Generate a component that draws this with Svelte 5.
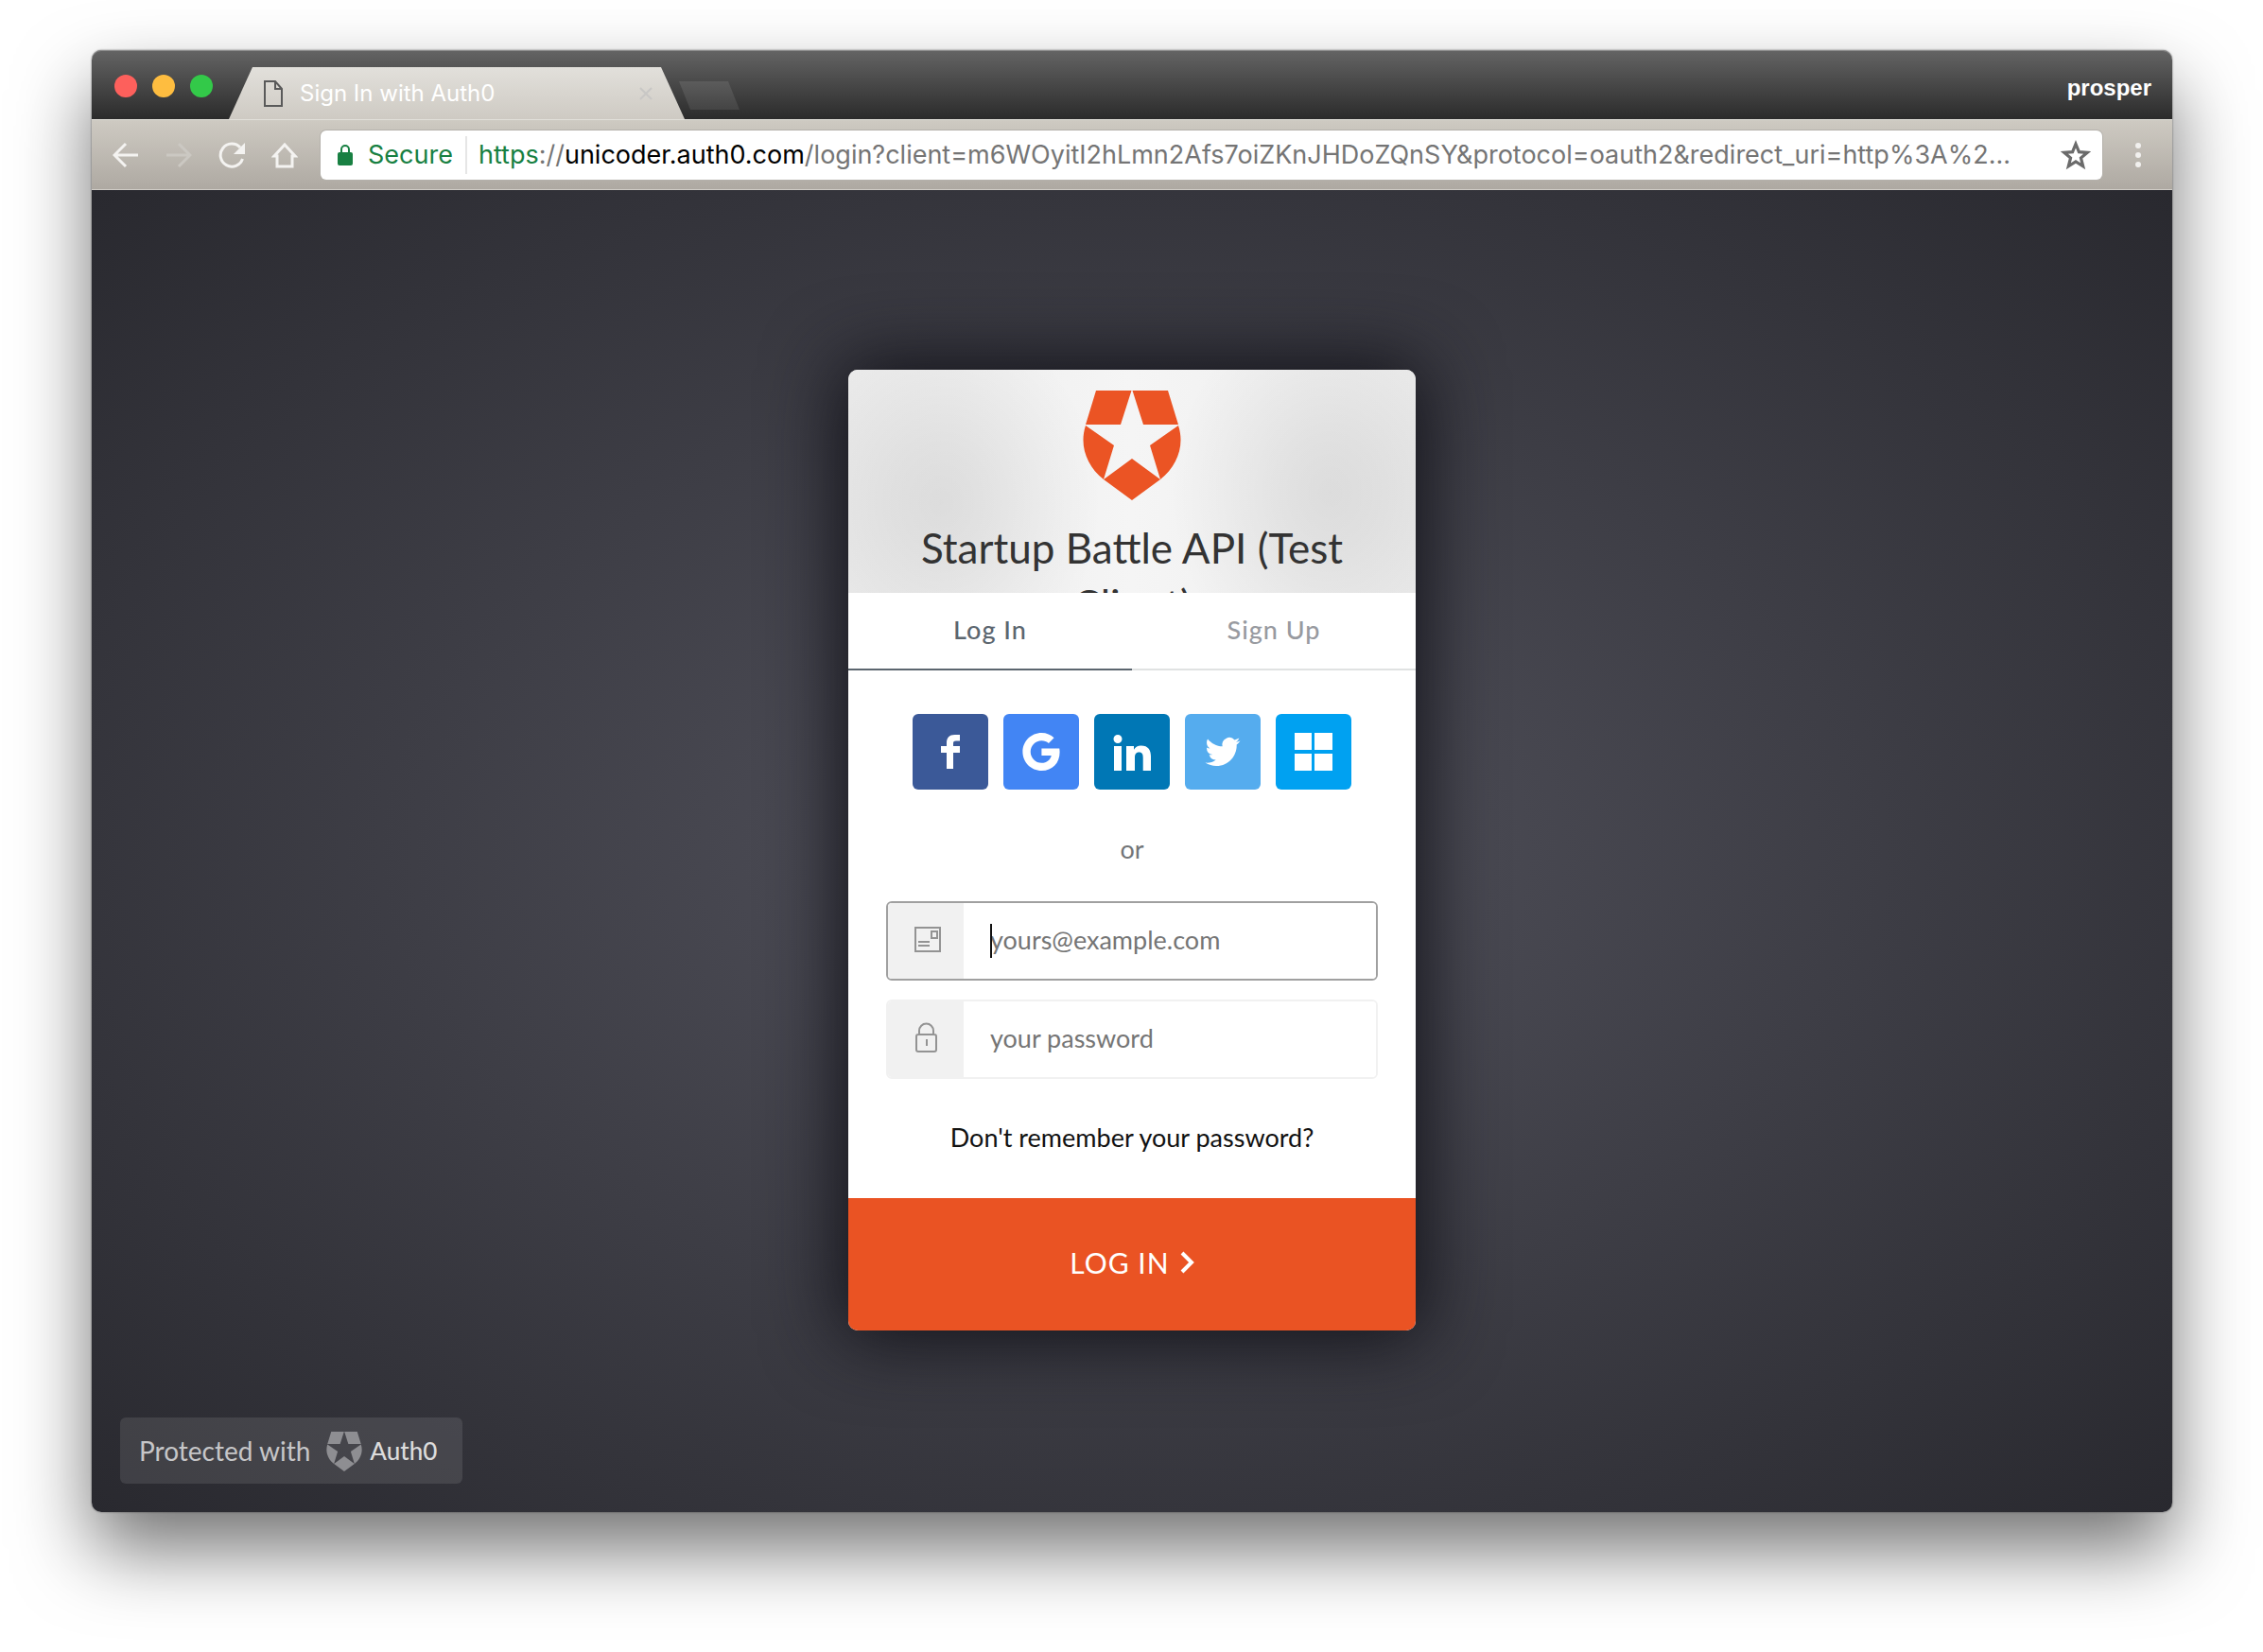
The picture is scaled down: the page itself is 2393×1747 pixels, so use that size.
<script>
  const url = {
    scheme: 'https',
    host: 'unicoder.auth0.com',
    path: '/login?client=m6WOyitI2hLmn2Afs7oiZKnJHDoZQnSY&protocol=oauth2&redirect_uri=http%3A%2...'
  };

  const modes = [
    { id: 'login', label: 'Log In' },
    { id: 'signup', label: 'Sign Up' }
  ];

  const providers = [
    {
      id: 'facebook',
      label: 'Log in with Facebook',
      box: '-10 -2 40 40',
      path: 'M20 0v6.500h-4c-2.600 0-3 1-3 3.100V12h7v7h-7v17H6V19H0v-7h6V8.600C6 3 9 0 14.500 0z'
    },
    {
      id: 'google',
      label: 'Log in with Google',
      box: '0 0 24 24',
      path: 'M12.24 9.900V14.400h6.200c-.6 2.700-2.800 4.700-6.200 4.700-3.900 0-7-3.200-7-7.100s3.100-7.100 7-7.100c1.800 0 3.300.6 4.500 1.700l3.400-3.400C18.100 1.200 15.400 0 12.240 0c-6.635 0-12 5.365-12 12s5.365 12 12 12c6.926 0 11.520-4.869 11.520-11.700 0-.8-.1-1.600-.2-2.400z'
    },
    {
      id: 'linkedin',
      label: 'Log in with LinkedIn',
      box: '0 -2 40 40',
      path: 'M5 0a4.500 4.500 0 1 1 0 9 4.500 4.500 0 0 1 0-9zM1 12h8v26H1zM14 12h8v3.800c1.500-2.900 4.300-4.400 7.500-4.400 7.900 0 10.500 4.900 10.500 11.600v15h-8.300V24.500c0-3.500-.6-6-4.200-6s-4.500 2.500-4.500 6V38h-9z'
    },
    {
      id: 'twitter',
      label: 'Log in with Twitter',
      box: '-1 -1 26 26',
      path: 'M23.953 4.570a10 10 0 0 1-2.825.775 4.958 4.958 0 0 0 2.163-2.723c-.951.555-2.005.959-3.127 1.184a4.920 4.920 0 0 0-8.384 4.482C7.690 8.095 4.067 6.130 1.640 3.162a4.822 4.822 0 0 0-.666 2.475c0 1.710.870 3.213 2.188 4.096a4.904 4.904 0 0 1-2.228-.616v.060a4.923 4.923 0 0 0 3.946 4.827 4.996 4.996 0 0 1-2.212.085 4.936 4.936 0 0 0 4.604 3.417 9.867 9.867 0 0 1-6.102 2.105c-.390 0-.779-.023-1.170-.067a13.995 13.995 0 0 0 7.557 2.209c9.053 0 13.998-7.496 13.998-13.985 0-.210 0-.420-.015-.630A9.935 9.935 0 0 0 24 4.590z'
    },
    {
      id: 'windows',
      label: 'Log in with Windows Live',
      box: '0 0 40 40',
      path: 'M0 0h18v18H0zM21 0h19v18H21zM0 22h18v18H0zM21 22h19v18H21z'
    }
  ];

  let mode = $state('login');
  let email = $state('');
  let password = $state('');
</script>

{#snippet shield()}
  <svg class="shield" viewBox="0 0 104 116" aria-hidden="true">
    <path d="M14 0H51.500L40 36H3ZM52.500 0H90L101 36H64ZM3 37L33 58 22 94C4 80-4 58 3 37ZM101 37L71 58 82 94C100 80 108 58 101 37ZM52 72L82 94 52 116 22 94Z" />
  </svg>
{/snippet}

<div class="desktop">
  <div class="window">
    <header class="titlebar">
      <div class="lights">
        <button class="light close" aria-label="Close window"></button>
        <button class="light minimize" aria-label="Minimize window"></button>
        <button class="light zoom" aria-label="Zoom window"></button>
      </div>
      <div class="tab">
        <svg class="page-icon" viewBox="0 0 20 28" aria-hidden="true">
          <path d="M1 1h11l7 8v18H1zM12 1v8h7" />
        </svg>
        <span class="tab-title">Sign In with Auth0</span>
        <button class="tab-close" aria-label="Close tab">
          <svg viewBox="0 0 14 14"><path d="M1 1l12 12M13 1L1 13" /></svg>
        </button>
      </div>
      <button class="new-tab" aria-label="New tab"></button>
      <span class="profile">prosper</span>
    </header>

    <nav class="toolbar">
      <button class="tool" aria-label="Back">
        <svg viewBox="0 0 28 28"><path d="M27 14H3M14 2L2 14l12 12" /></svg>
      </button>
      <button class="tool" aria-label="Forward" disabled>
        <svg viewBox="0 0 28 28"><path d="M1 14h24M14 2l12 12-12 12" /></svg>
      </button>
      <button class="tool" aria-label="Reload">
        <svg viewBox="0 0 28 28">
          <path d="M23 6A12 12 0 1 0 25.500 18" />
          <path class="solid" d="M28 1v12H16z" />
        </svg>
      </button>
      <button class="tool" aria-label="Home">
        <svg viewBox="0 0 28 28"><path d="M14 3L3 15h3v11h16V15h3z" /></svg>
      </button>
      <div class="address">
        <svg class="lock" viewBox="0 0 16 22" aria-hidden="true">
          <path d="M2 8h12a2 2 0 0 1 2 2v10a2 2 0 0 1-2 2H2a2 2 0 0 1-2-2V10a2 2 0 0 1 2-2z" />
          <path class="shackle" d="M4 9V5a4 4 0 0 1 8 0v4" />
        </svg>
        <span class="secure">Secure</span>
        <span class="url"><span class="scheme">{url.scheme}</span>://<span class="host">{url.host}</span>{url.path}</span>
        <button class="bookmark" aria-label="Bookmark this page">
          <svg viewBox="0 0 30 30">
            <path d="M15 4l3.200 7.900 8.300.6-6.400 5.300 2.100 8.200L15 21.500 7.800 26l2.100-8.200-6.400-5.300 8.300-.6z" />
          </svg>
        </button>
      </div>
      <button class="menu" aria-label="Menu">
        <span></span><span></span><span></span>
      </button>
    </nav>

    <main class="page">
      <form class="card" onsubmit={(e) => e.preventDefault()}>
        <div class="card-head">
          {@render shield()}
          <h1>Startup Battle API (Test Client)</h1>
        </div>

        <div class="modes">
          {#each modes as m (m.id)}
            <button type="button" class="mode" class:active={mode === m.id} onclick={() => (mode = m.id)}>
              {m.label}
            </button>
          {/each}
        </div>

        <div class="card-body">
          <div class="providers">
            {#each providers as p (p.id)}
              <button type="button" class="provider {p.id}" aria-label={p.label}>
                <svg viewBox={p.box}><path d={p.path} /></svg>
              </button>
            {/each}
          </div>

          <p class="or">or</p>

          <div class="field focused">
            <label for="email" aria-label="Email">
              <svg viewBox="0 0 28 28">
                <path d="M1 1h26v25H1zM18 5h6v7h-6zM4 16h12M4 20h12" />
              </svg>
            </label>
            <input id="email" type="email" placeholder="yours@example.com" bind:value={email} />
            <span class="caret"></span>
          </div>
          <div class="field">
            <label for="password" aria-label="Password">
              <svg viewBox="0 0 28 28">
                <path d="M4 10h17a2 2 0 0 1 2 2v14a2 2 0 0 1-2 2H4a2 2 0 0 1-2-2V12a2 2 0 0 1 2-2zM5 10V6a7 7 0 0 1 15 0v4M13 15v7" />
              </svg>
            </label>
            <input id="password" type="password" placeholder="your password" bind:value={password} />
          </div>

          <a class="forgot" href="#reset">Don't remember your password?</a>
        </div>

        <button class="submit" type="submit">
          LOG IN
          <svg viewBox="0 0 16 24"><path d="M3 2l10 10L3 22" /></svg>
        </button>
      </form>

      <a class="badge" href="#auth0">
        <span>Protected with</span>
        {@render shield()}
        <strong>Auth0</strong>
      </a>
    </main>
  </div>
</div>

<style>
  :global(body) { margin: 0; background: #fff; }

  .desktop {
    box-sizing: border-box;
    min-height: 100vh;
    padding: 53px 96px 148px 97px;
    display: flex;
    overflow: hidden;
  }
  .window {
    flex: 1;
    min-width: 0;
    display: flex;
    flex-direction: column;
    border-radius: 10px;
    font-family: Inter, sans-serif;
    box-shadow: 0 0 2px rgba(0, 0, 0, 0.6), 0 40px 80px rgba(0, 0, 0, 0.55);
  }
  button {
    border: none;
    padding: 0;
    background: none;
    font: inherit;
    cursor: pointer;
  }
  svg {
    display: block;
    fill: none;
  }

  .titlebar {
    height: 73px;
    display: flex;
    align-items: flex-end;
    padding: 0 22px 0 24px;
    border-radius: 10px 10px 0 0;
    background: linear-gradient(#646464, #2b2b2b);
    box-shadow: inset 0 1px #8a8a8a;
    box-sizing: border-box;
  }
  .lights {
    display: flex;
    gap: 16px;
    padding-bottom: 23px;
    margin-right: 17px;
  }
  .light {
    width: 24px;
    height: 24px;
    border-radius: 50%;
  }
  .close { background: #fd605c; }
  .minimize { background: #febd40; }
  .zoom { background: #33c949; }

  .tab {
    box-sizing: border-box;
    width: 482px;
    height: 55px;
    padding: 0 34px 0 37px;
    display: flex;
    align-items: center;
    gap: 18px;
    background: linear-gradient(#e2e0db, #cecac3);
    clip-path: polygon(25px 0, 457px 0, 100% 100%, 0 100%);
  }
  .page-icon {
    width: 20px;
    height: 28px;
    stroke: #5a5a5a;
    stroke-width: 2;
  }
  .tab-title {
    flex: 1;
    color: #fff;
    font-size: 24px;
    line-height: 32px;
  }
  .tab-close svg {
    width: 14px;
    height: 14px;
    stroke: #c8c7c5;
    stroke-width: 2;
  }
  .new-tab {
    width: 64px;
    height: 30px;
    margin-bottom: 10px;
    margin-left: -6px;
    background: linear-gradient(#5c5c5c, #444);
    clip-path: polygon(0 0, 52px 0, 100% 100%, 12px 100%);
  }
  .profile {
    margin-left: auto;
    padding-bottom: 17px;
    color: #fff;
    font-family: "Liberation Sans", sans-serif;
    font-size: 24px;
    font-weight: 700;
    line-height: 32px;
  }

  .toolbar {
    box-sizing: border-box;
    height: 75px;
    display: flex;
    align-items: center;
    gap: 28px;
    padding: 0 30px 0 22px;
    border-top: 1px solid #e2e0da;
    border-bottom: 1px solid #cfccc6;
    background: linear-gradient(#cecac2, #aea9a2);
  }
  .tool svg {
    width: 28px;
    height: 28px;
    stroke: #f4f3f1;
    stroke-width: 3;
  }
  .tool:disabled svg { stroke: #cbc8c2; }
  .tool .solid { fill: #f4f3f1; stroke: none; }
  .address {
    flex: 1;
    min-width: 0;
    height: 52px;
    margin-left: -4px;
    padding: 0 12px 0 18px;
    display: flex;
    align-items: center;
    background: #fff;
    border-radius: 6px;
    box-shadow: 0 0 0 1px #b4b1ab;
    font-size: 27px;
    line-height: 40px;
  }
  .lock {
    width: 16px;
    height: 22px;
    fill: #188042;
  }
  .shackle {
    fill: none;
    stroke: #188042;
    stroke-width: 2;
  }
  .secure {
    color: #188042;
    padding: 0 13px 0 16px;
    border-right: 2px solid #e6e6e6;
    margin-right: 12px;
  }
  .url {
    flex: 1;
    min-width: 0;
    overflow: hidden;
    white-space: nowrap;
    color: #757575;
  }
  .scheme { color: #188042; }
  .host { color: #000; }
  .bookmark svg {
    width: 32px;
    height: 32px;
    stroke: #6b6b6b;
    stroke-width: 3;
  }
  .menu {
    width: 12px;
    margin-left: 4px;
    display: flex;
    flex-direction: column;
    align-items: center;
    gap: 4px;
  }
  .menu span {
    width: 6px;
    height: 6px;
    border-radius: 50%;
    background: #f1f0ee;
  }

  .page {
    position: relative;
    flex: 1;
    display: flex;
    align-items: center;
    justify-content: center;
    padding: 60px 30px 62px;
    border-radius: 0 0 10px 10px;
    background: radial-gradient(#52525c, #29292f);
    font-family: Lato, sans-serif;
  }
  .card {
    width: 600px;
    border-radius: 10px;
    overflow: hidden;
    background: #fff;
    box-shadow: 0 0 80px 8px #111118;
  }
  .card-head {
    box-sizing: border-box;
    height: 236px;
    padding: 22px 40px 0;
    overflow: hidden;
    text-align: center;
    background:
      radial-gradient(ellipse 170px 200px at 98px 140px, rgba(0, 0, 0, 0.08), rgba(0, 0, 0, 0.06) 30%, rgba(0, 0, 0, 0.02) 75%, transparent),
      radial-gradient(ellipse 170px 200px at 510px 130px, rgba(0, 0, 0, 0.08), rgba(0, 0, 0, 0.06) 30%, rgba(0, 0, 0, 0.02) 75%, transparent),
      linear-gradient(90deg, #ececec, #f5f5f5 50%, #ececec);
  }
  .card-head .shield {
    width: 104px;
    height: 116px;
    margin: 0 auto;
    fill: #eb5424;
  }
  h1 {
    margin: 20px 0 0;
    color: #333;
    font-size: 44px;
    font-weight: 400;
    line-height: 60px;
  }

  .modes { display: flex; }
  .mode {
    flex: 1;
    height: 82px;
    padding-bottom: 4px;
    border-bottom: 2px solid #e0e2e2;
    color: #989aa0;
    font-size: 27px;
    font-weight: 500;
    letter-spacing: 1px;
  }
  .mode.active {
    color: #5c666f;
    border-bottom-color: #5c666f;
  }

  .card-body {
    padding: 46px 40px 48px;
    text-align: center;
    font-size: 27px;
    line-height: 32px;
  }
  .providers {
    display: flex;
    justify-content: center;
    gap: 16px;
  }
  .provider {
    width: 80px;
    height: 80px;
    display: grid;
    place-items: center;
    border-radius: 6px;
  }
  .provider svg {
    width: 40px;
    height: 40px;
    fill: #fff;
  }
  .facebook { background: #3b5998; }
  .google { background: #4285f4; }
  .linkedin { background: #0077b5; }
  .twitter { background: #55acee; }
  .windows { background: #00a1f1; }
  .or {
    margin: 47px 0 39px;
    color: #727578;
  }

  .field {
    position: relative;
    display: flex;
    height: 80px;
    margin-bottom: 20px;
    border: 2px solid #f1f1f1;
    border-radius: 6px;
    overflow: hidden;
  }
  .field.focused { border-color: #a0a0a0; }
  .field label {
    box-sizing: border-box;
    width: 80px;
    padding: 0 0 2px 3px;
    display: grid;
    place-items: center;
    background: #f1f1f1;
  }
  .field label svg {
    width: 28px;
    height: 28px;
    stroke: #939393;
    stroke-width: 2;
    overflow: visible;
  }
  .field input {
    flex: 1;
    min-width: 0;
    border: none;
    outline: none;
    padding: 0 28px 3px;
    font: inherit;
    color: #222;
  }
  .field input::placeholder { color: #757575; }
  .caret {
    position: absolute;
    top: 22px;
    left: 108px;
    width: 2px;
    height: 36px;
    background: #111;
  }
  .forgot {
    display: block;
    margin-top: 46px;
    color: #111;
    text-decoration: none;
  }

  .submit {
    width: 100%;
    height: 140px;
    padding-bottom: 4px;
    display: flex;
    align-items: center;
    justify-content: center;
    gap: 10px;
    background: #ea5323;
    color: #fff;
    font-size: 30px;
    letter-spacing: 1px;
  }
  .submit svg {
    width: 16px;
    height: 24px;
    stroke: #fff;
    stroke-width: 4;
  }

  .badge {
    position: absolute;
    left: 30px;
    bottom: 30px;
    box-sizing: border-box;
    height: 70px;
    padding: 0 27px 0 20px;
    display: flex;
    align-items: center;
    border-radius: 6px;
    background: rgba(255, 255, 255, 0.1);
    color: #c6c6c8;
    font-size: 28px;
    text-decoration: none;
  }
  .badge .shield {
    width: 38px;
    height: 42px;
    margin: 2px 8px 0 17px;
    fill: #8e8e92;
  }
  .badge strong {
    color: #dcdcdc;
    font-size: 26px;
    font-weight: 500;
  }
</style>
